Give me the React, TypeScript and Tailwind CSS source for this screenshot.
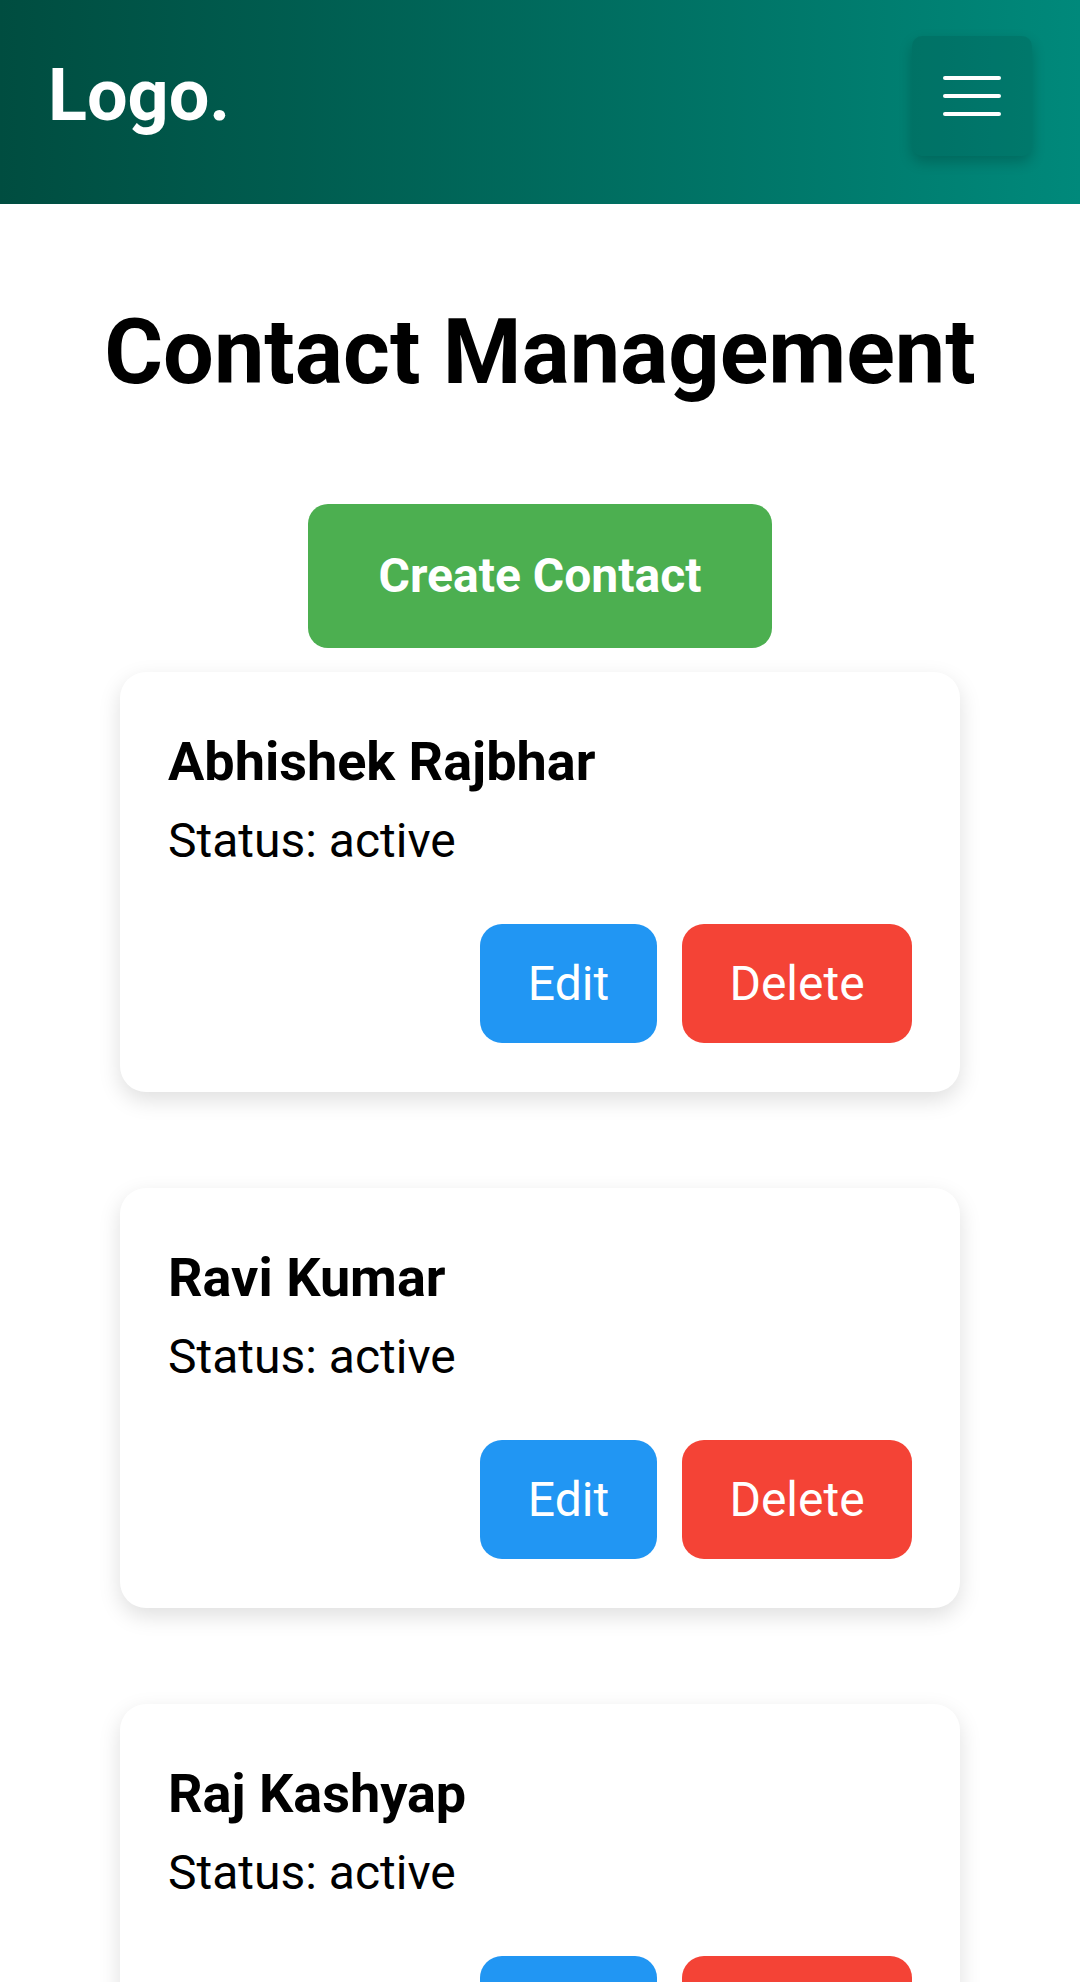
import React from 'react';

interface Contact {
  id: number;
  name: string;
  status: string;
}

const contacts: Contact[] = [
  { id: 1, name: 'Abhishek Rajbhar', status: 'active' },
  { id: 2, name: 'Ravi Kumar', status: 'active' },
  { id: 3, name: 'Raj Kashyap', status: 'active' },
];

const Header = () => (
  <header className="flex h-[204px] items-center justify-between bg-gradient-to-r from-[#004d40] to-[#00897b] pl-[48px] pr-[48px] pt-[36px] pb-[48px]">
    <span className="text-[72px] font-bold text-white">Logo.</span>
    <button className="flex h-[120px] w-[120px] flex-col items-center justify-center gap-[14px] rounded-[10px] bg-black/10 shadow-[0_6px_14px_rgba(0,0,0,0.2)]">
      <span className="block h-[4px] w-[58px] rounded-full bg-white" />
      <span className="block h-[4px] w-[58px] rounded-full bg-white" />
      <span className="block h-[4px] w-[58px] rounded-full bg-white" />
    </button>
  </header>
);

const ContactCard = ({ contact }: { contact: Contact }) => (
  <div className="w-[840px] rounded-[26px] bg-white px-[48px] pt-[59px] pb-[49px] shadow-[0_8px_22px_rgba(0,0,0,0.13)]">
    <h3 className="text-[54px] font-bold leading-[61px] text-black">{contact.name}</h3>
    <p className="mt-[23px] text-[48px] leading-[52px] text-black">Status: {contact.status}</p>
    <div className="mt-[57px] flex justify-end gap-[25px]">
      <button className="h-[119px] w-[177px] rounded-[22px] bg-[#2196f3] text-[48px] text-white">Edit</button>
      <button className="h-[119px] w-[230px] rounded-[22px] bg-[#f44336] text-[48px] text-white">Delete</button>
    </div>
  </div>
);

export default function App() {
  return (
    <div className="min-h-screen bg-white font-['Roboto',sans-serif]">
      <Header />
      <main className="flex flex-col items-center">
        <h1 className="mt-[100px] text-[90px] font-bold leading-[98px] text-black">Contact Management</h1>
        <button className="mt-[102px] h-[144px] w-[464px] rounded-[20px] bg-[#4caf50] text-[48px] font-bold text-white">
          Create Contact
        </button>
        <div className="mt-[24px] flex flex-col items-center gap-[96px] pb-[96px]">
          {contacts.map((c) => (
            <ContactCard key={c.id} contact={c} />
          ))}
        </div>
      </main>
    </div>
  );
}
